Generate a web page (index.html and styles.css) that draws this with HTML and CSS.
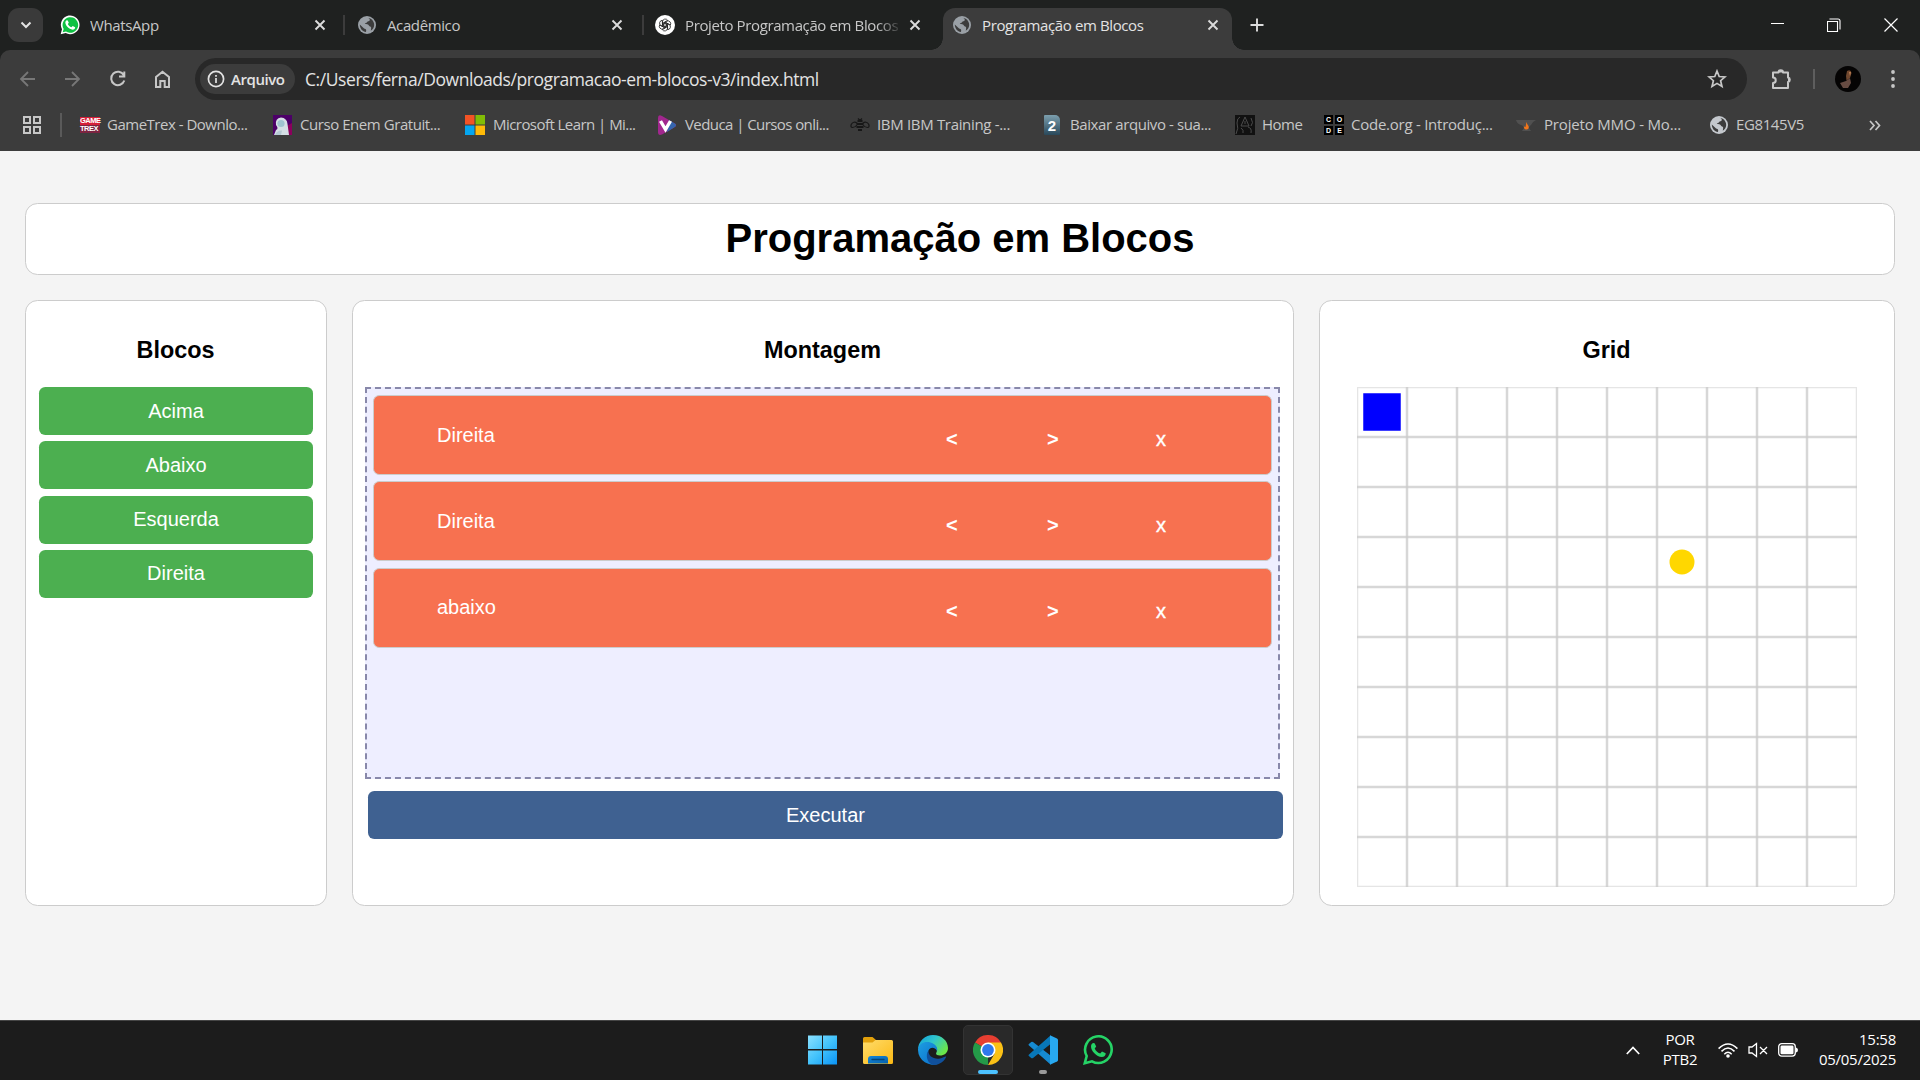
FILE: index.html
```html
<!DOCTYPE html>
<html lang="pt-BR">
<head>
<meta charset="utf-8">
<title>Programação em Blocos</title>
<link rel="stylesheet" href="styles.css">
</head>
<body>
<svg class="defs" width="0" height="0">
  <symbol id="globe" viewBox="0 0 18 18">
    <circle cx="9" cy="9" r="9" fill="currentColor"/>
    <path class="globe-land" d="M9 1.8C11 2 12 3 11.8 4.200C11.600 5.300 9.500 5 9 6.200C8.700 7.200 7 6.800 6.800 8C8.500 8.300 10.500 8 10.900 9.600C11 10.800 13 10.200 13.200 11.800L12.800 14.800C15 13.300 16.200 11.200 16.200 9C16.200 5 13 1.800 9 1.800ZM1.800 8.500L5.800 12.300C6.800 13.200 8.300 12.800 8.200 14.300L8 16.100C4.500 15.700 1.900 12.600 1.800 8.500Z"/>
  </symbol>
  <symbol id="close" viewBox="0 0 12 12"><path d="M1.500 1.500L10.500 10.500M10.500 1.500L1.500 10.500" stroke="currentColor" stroke-width="1.900" fill="none"/></symbol>
  <symbol id="phone" viewBox="0 0 30 30">
    <path d="M10.400 8C9.300 8.200 8 9.500 8 11.400C8 15.500 13.500 22 18.800 22C21.300 22 22.800 20.400 22.700 18.300L19 16.400L17.200 18.500C14.500 17.500 12.800 15.800 11.700 13.400L13.200 11.500L11.600 8.200Z" fill="currentColor"/>
  </symbol>
</svg>

<header class="browser">
  <div class="tabstrip">
    <button class="tab-search"><svg width="12" height="8" viewBox="0 0 12 8"><path d="M1.500 1.500L6 6L10.500 1.500" fill="none" stroke="#e3e3e3" stroke-width="2"/></svg></button>
    <div class="tab tab-1">
      <svg class="fav" width="20" height="20" viewBox="0 0 30 30"><path d="M1 29L3 21.500A14 14 0 1 1 8.500 27Z" fill="#fff"/><path d="M4 26L5.500 21A11.700 11.700 0 1 1 9 24.700Z" fill="#0fc143"/><use href="#phone" color="#fff"/></svg>
      <span class="tab-title">WhatsApp</span>
      <svg class="x" width="12" height="12"><use href="#close"/></svg>
    </div>
    <div class="tab tab-2">
      <svg class="fav globe" width="18" height="18"><use href="#globe"/></svg>
      <span class="tab-title">Acadêmico</span>
      <svg class="x" width="12" height="12"><use href="#close"/></svg>
    </div>
    <div class="tab tab-3">
      <svg class="fav" width="20" height="20" viewBox="0 0 20 20"><circle cx="10" cy="10" r="10" fill="#fff"/><g fill="none" stroke="#222" stroke-width=".8"><path id="petal" d="M7.500 11.500V6.700A2.800 2.800 0 0 1 12.700 5.400L8.700 7.800V12"/><use href="#petal" transform="rotate(60 10 10)"/><use href="#petal" transform="rotate(120 10 10)"/><use href="#petal" transform="rotate(180 10 10)"/><use href="#petal" transform="rotate(240 10 10)"/><use href="#petal" transform="rotate(300 10 10)"/></g></svg>
      <span class="tab-title fade">Projeto Programação em Blocos</span>
      <svg class="x" width="12" height="12"><use href="#close"/></svg>
    </div>
    <div class="tab active">
      <svg class="fav globe" width="18" height="18"><use href="#globe"/></svg>
      <span class="tab-title">Programação em Blocos</span>
      <svg class="x" width="12" height="12"><use href="#close"/></svg>
    </div>
    <svg class="new-tab" width="14" height="14" viewBox="0 0 14 14"><path d="M7 0.500V13.500M0.500 7H13.500" stroke="#dcdcdc" stroke-width="1.900"/></svg>
    <div class="window-controls">
      <svg width="14" height="14" viewBox="0 0 14 14"><path d="M1 5.500H14" stroke="#fff"/></svg>
      <svg width="14" height="14" viewBox="0 0 14 14"><path d="M3 1.500V1H11Q13 1 13 3V11.500M.5 3.500H10.500V13.500H.5Z" fill="none" stroke="#fff" stroke-width="1.100"/></svg>
      <svg width="14" height="14" viewBox="0 0 14 14"><path d="M.5 .5L13.500 13.500M13.500 .5L.5 13.500" stroke="#fff" stroke-width="1.200"/></svg>
    </div>
  </div>

  <div class="toolbar">
    <nav class="nav-icons">
      <svg class="dim" width="18" height="18" viewBox="0 0 18 18"><path d="M16 9H2M9 2L2 9L9 16"/></svg>
      <svg class="dim" width="18" height="18" viewBox="0 0 18 18"><path d="M1 9H15M8 2L15 9L8 16"/></svg>
      <svg width="18" height="18" viewBox="0 0 18 18"><path d="M15.300 10.500A6.700 6.700 0 1 1 14.800 5.200M15.300 1.500V6.500H10"/></svg>
      <svg width="18" height="18" viewBox="0 0 18 18"><path d="M2 17V7L8.500 1.800L15 7V17H10.700V11H6.300V17Z"/></svg>
    </nav>
    <div class="omnibox">
      <div class="chip"><svg width="18" height="18" viewBox="0 0 18 18"><circle cx="9" cy="9" r="7.600" fill="none" stroke="#e3e3e3" stroke-width="1.700"/><path d="M9 8V13M9 5V6.700" stroke="#e3e3e3" stroke-width="1.700"/></svg><span>Arquivo</span></div>
      <span class="url">C:/Users/ferna/Downloads/programacao-em-blocos-v3/index.html</span>
      <svg class="star" width="20" height="20" viewBox="0 0 20 20"><path d="M10 2L12.200 7.500L18 7.900L13.600 11.700L15 17.500L10 14.400L5 17.500L6.400 11.700L2 7.900L7.800 7.500Z" fill="none" stroke="#c7c7c7" stroke-width="1.700"/></svg>
    </div>
    <svg class="puzzle" width="22" height="22" viewBox="0 0 22 22"><path d="M2 4.500H7.500A2.200 2.200 0 0 1 12 4.500H17V9.500A2.300 2.300 0 0 1 17 14V20H2V15A2.600 2.600 0 0 0 2 9.500Z" fill="none" stroke="#c7c7c7" stroke-width="2" stroke-linejoin="round"/><path d="M7.500 4.500A2.200 2.200 0 0 1 12 4.500ZM17 9.500A2.300 2.300 0 0 1 17 14Z" fill="#c7c7c7"/></svg>
    <span class="divider"></span>
    <svg class="avatar" width="26" height="26" viewBox="0 0 26 26"><circle cx="13" cy="13" r="13" fill="#050404"/><path d="M12 5Q16 3 16.500 7L15 12L11.500 14.500L11 10Z" fill="#70482f"/><path d="M5 17L11 15L15 12L16 17L13 22L8 22Z" fill="#664b42"/><path d="M14 6L16 6L15 10Z" fill="#bd8055"/></svg>
    <svg class="menu" width="4" height="18" viewBox="0 0 4 18"><g fill="#c7c7c7"><circle cx="2" cy="2" r="1.900"/><circle cx="2" cy="9" r="1.900"/><circle cx="2" cy="16" r="1.900"/></g></svg>
  </div>

  <div class="bookmarks">
    <div class="bm-apps"><svg width="18" height="18" viewBox="0 0 18 18"><g fill="none" stroke="#c7c7c7" stroke-width="2"><path d="M1 1H7V7H1ZM11 1H17V7H11ZM1 11H7V17H1ZM11 11H17V17H11Z"/></g></svg></div>
    <div class="bm b1"><span class="trex"><i>GAME</i><i>TREX</i></span><span class="label">GameTrex - Downlo...</span></div>
    <div class="bm b2"><svg width="19" height="20" viewBox="0 0 19 20"><path d="M0 0H19V20H0Z" fill="#4c0068"/><path d="M12 12L19 8V20H14Z" fill="#8b005d"/><path d="M3 10Q2 3 8 2.500Q14 3 14.500 9L16 20H1L3 15Q6 13.500 3 10Z" fill="#d5dfe5"/><circle cx="8" cy="8.500" r="3.600" fill="#9fc3cf"/><path d="M2 20Q4 15 9 15.500L8 20Z" fill="#b5c9d3"/></svg><span class="label">Curso Enem Gratuit...</span></div>
    <div class="bm b3"><svg width="20" height="20" viewBox="0 0 20 20"><path d="M0 0H9.500V9.500H0Z" fill="#f35325"/><path d="M10.500 0H20V9.500H10.500Z" fill="#81bc06"/><path d="M0 10.500H9.500V20H0Z" fill="#05a6f0"/><path d="M10.500 10.500H20V20H10.500Z" fill="#ffba08"/></svg><span class="label">Microsoft Learn | Mi...</span></div>
    <div class="bm b4"><svg width="19" height="20" viewBox="0 0 19 20"><path d="M0 3Q0 -1 4 1L16 8Q20 10 16 12.500L4 19.500Q0 21 0 17Z" fill="#a1278e"/><path d="M11 5L16 8Q20 10 16 12.500L9 17Z" fill="#3465ad"/><path d="M2.500 6L7.500 14.500L12.500 6" stroke="#fff" stroke-width="3.400" fill="none"/></svg><span class="label">Veduca | Cursos onli...</span></div>
    <div class="bm b5"><svg width="20" height="20" viewBox="0 0 20 20"><path d="M7.500 8.500Q3.500 5.500 1.200 9.500Q.3 12.500 2.500 12.500Q5 12.500 7 10M12.500 8.500Q16.500 5.500 18.800 9.500Q19.700 12.500 17.500 12.500Q15 12.500 13 10M8 3.500L10 5.500L12 3.500" fill="none" stroke="#171717" stroke-width="1.200"/><path d="M7.500 6H12.500M6.500 9H13.500M6.500 12H13.500M8 15H12" stroke="#171717" stroke-width="1.900"/></svg><span class="label">IBM IBM Training -...</span></div>
    <div class="bm b6"><span class="two">2</span><span class="label">Baixar arquivo - sua...</span></div>
    <div class="bm b7"><svg width="20" height="20" viewBox="0 0 20 20"><path d="M0 0H20V20H0Z" fill="#111"/><path d="M1 19Q4 13 2 8Q2 3 5 2M10 2L6 11H14ZM6 13Q9 15 8 18M13 12Q17 13 16 18M16 3Q19 8 16 11M10 6V9" fill="none" stroke="#4b4b4b"/></svg><span class="label">Home</span></div>
    <div class="bm b8"><span class="code"><i>C</i><i>O</i><i>D</i><i>E</i></span><span class="label">Code.org - Introduç...</span></div>
    <div class="bm b9"><svg width="20" height="20" viewBox="0 0 20 20"><path d="M0 5H20Q16 7 15 10Q13 11 13 13L15 16H6L8 13Q7 10 5 10Q1 9 0 5Z" fill="#505050"/><path d="M10.500 7Q11 9.500 12.500 11Q13.500 14.500 10.500 14.500Q7.500 14.500 8 11.500L9.500 12Z" fill="#f27519"/></svg><span class="label">Projeto MMO - Mo...</span></div>
    <div class="bm b10"><svg class="globe light" width="18" height="18"><use href="#globe"/></svg><span class="label">EG8145V5</span></div>
    <svg class="more" width="12" height="11" viewBox="0 0 12 11"><path d="M1 1L5 5.500L1 10M6.500 1L10.500 5.500L6.500 10" fill="none" stroke="#c7c7c7" stroke-width="1.700"/></svg>
  </div>
</header>

<main class="page">
  <h1 class="card title">Programação em Blocos</h1>
  <div class="columns">
    <section class="card panel">
      <h3>Blocos</h3>
      <div class="palette">
        <button class="block">Acima</button>
        <button class="block">Abaixo</button>
        <button class="block">Esquerda</button>
        <button class="block">Direita</button>
      </div>
    </section>
    <section class="card panel">
      <h3>Montagem</h3>
      <div class="dropzone">
        <div class="step"><span class="name">Direita</span><b>&lt;</b><b>&gt;</b><b>x</b></div>
        <div class="step"><span class="name">Direita</span><b>&lt;</b><b>&gt;</b><b>x</b></div>
        <div class="step"><span class="name">abaixo</span><b>&lt;</b><b>&gt;</b><b>x</b></div>
      </div>
      <button class="run">Executar</button>
    </section>
    <section class="card panel">
      <h3>Grid</h3>
      <svg class="grid" width="500" height="500" viewBox="0 0 400 400">
        <g stroke="#ccc" stroke-opacity=".78" stroke-width="2">
          <path d="M40 0V400M80 0V400M120 0V400M160 0V400M200 0V400M240 0V400M280 0V400M320 0V400M360 0V400"/>
          <path d="M0 40H400M0 80H400M0 120H400M0 160H400M0 200H400M0 240H400M0 280H400M0 320H400M0 360H400"/>
        </g>
        <path d="M0 0H400V400H0Z" fill="none" stroke="#ccc" stroke-opacity=".5" stroke-width="2"/>
        <rect x="5" y="5" width="30" height="30" fill="#00f"/>
        <circle cx="260" cy="140" r="10" fill="#ffd700"/>
      </svg>
    </section>
  </div>
</main>

<footer class="taskbar">
  <div class="apps">
    <div class="app"><svg width="30" height="30" viewBox="0 0 30 30"><defs><linearGradient id="win" x1="0" y1="0" x2="1" y2="1"><stop offset="0" stop-color="#8be1ff"/><stop offset=".5" stop-color="#42c2fb"/><stop offset="1" stop-color="#0a93f5"/></linearGradient></defs><path d="M0 .5H14V14H0ZM15 .5H29V14H15ZM0 15.500H14V29.500H0ZM15 15.500H29V29.500H15Z" fill="url(#win)"/></svg></div>
    <div class="app"><svg width="30" height="30" viewBox="0 0 30 30"><defs><linearGradient id="fold" x1="0" y1="0" x2="1" y2="1"><stop offset="0" stop-color="#ffdc6b"/><stop offset="1" stop-color="#fbb914"/></linearGradient><linearGradient id="clip" x1="0" y1="0" x2="1" y2="1"><stop offset="0" stop-color="#1486d8"/><stop offset="1" stop-color="#0561ac"/></linearGradient></defs><path d="M0 3.500Q0 2 1.500 2H9.500L13 5H17V12H0Z" fill="#e2a00b"/><path d="M0 7.500H9.500L12.500 5H28.500Q30 5 30 6.500V27.500Q30 29 28.500 29H1.500Q0 29 0 27.500Z" fill="url(#fold)"/><path d="M5 28.500V24Q5 21 8 21H22Q25 21 25 24V28.500Z" fill="url(#clip)"/><path d="M9 24.500H21" stroke="#064577" stroke-width="1.300" stroke-linecap="round"/></svg></div>
    <div class="app"><svg width="30" height="30" viewBox="0 0 30 30"><defs><linearGradient id="edgeTop" x1="0" y1="0" x2="1" y2=".6"><stop offset="0" stop-color="#0f9fdd"/><stop offset=".5" stop-color="#30c5cc"/><stop offset="1" stop-color="#6be64a"/></linearGradient><linearGradient id="edgeBody" x1="0" y1="0" x2="1" y2="1"><stop offset="0" stop-color="#1d9de1"/><stop offset="1" stop-color="#0a6dca"/></linearGradient></defs><path d="M0 14A15 15 0 0 1 15 0C24 0 30 6 30 13C30 18 26 20.500 22 20.500C18.500 20.500 17.300 19 18.500 17.200C20 14.500 18 10 12 8Q5 6 0 14Z" fill="url(#edgeTop)"/><path d="M0 14C1 8 8 5.500 14 8C18 9.600 20 13 19 16C17 12 12 11.500 10.300 16C8 23 15 28 21 28.500A15 15 0 0 1 0 15Z" fill="url(#edgeBody)"/><path d="M10.500 15.500C10 21 15.500 24.500 22 23.500C25 23 27 21 28.300 21.500C27 25.500 22 30 16 30C9 29 7 20 10.500 15.500Z" fill="#10509c"/></svg></div>
    <div class="app current"><svg width="30" height="30" viewBox="0 0 30 30"><path d="M15 15L2 7.500A15 15 0 0 1 28 7.500Z" fill="#e73e31"/><path d="M15 15V30A15 15 0 0 1 2 7.500Z" fill="#249a48"/><path d="M15 7.500H28A15 15 0 0 1 15 30L21.500 18.700Z" fill="#fbc116"/><circle cx="15" cy="15" r="7.500" fill="#fff"/><circle cx="15" cy="15" r="5.900" fill="#3078ed"/></svg><i class="mark"></i></div>
    <div class="app"><svg width="30" height="30" viewBox="0 0 30 30"><path d="M1.500 8.500L3.200 7Q4 6.500 5 7L22.500 20.500V29.500L.7 10.300Q0 9.300 1.500 8.500Z" fill="#168bd2"/><path d="M1.500 21.500L3.200 23Q4 23.500 5 23L22.500 9V.5L.7 19.700Q0 20.600 1.500 21.500Z" fill="#0877b8"/><path d="M22 .2L29 3.500Q30 4 30 5V25Q30 26 29 26.500L22 29.800Z" fill="#28a9f1"/></svg><i class="mark small"></i></div>
    <div class="app"><svg width="30" height="30" viewBox="0 0 30 30"><path d="M1.800 28.200L3.700 21A13.300 13.300 0 1 1 9 26.300Z" fill="none" stroke="#25d366" stroke-width="2.600"/><use href="#phone" color="#25d366"/></svg></div>
  </div>
  <div class="tray">
    <svg class="up" width="14" height="9" viewBox="0 0 14 9"><path d="M.8 8L7 1.500L13.200 8" fill="none" stroke="#fff" stroke-width="1.700"/></svg>
    <div class="lang"><span>POR</span><span>PTB2</span></div>
    <svg class="wifi" width="20" height="15" viewBox="0 0 20 15"><g fill="none" stroke="#fff" stroke-width="1.500"><path d="M.6 5.600Q10 -3.700 19.400 5.600M3.500 8.400Q10 1.800 16.500 8.400M6.300 11.200Q10 7.500 13.700 11.200"/></g><circle cx="10" cy="13" r="1.800" fill="#fff"/></svg>
    <svg class="sound" width="20" height="16" viewBox="0 0 20 16"><path d="M1 5H4L8.500 1.500V14.500L4 11H1ZM12 5L19 12M19 5L12 12" fill="none" stroke="#fff" stroke-width="1.300"/></svg>
    <svg class="battery" width="20" height="14" viewBox="0 0 20 14"><rect x=".7" y=".7" width="16.600" height="12.400" rx="3" fill="none" stroke="#fff" stroke-width="1.300"/><rect x="2.500" y="2.500" width="13" height="8.800" rx="1.300" fill="#fff"/><path d="M18 4.500Q20 5 20 7Q20 9 18 9.500Z" fill="#fff"/></svg>
    <div class="clock"><span>15:58</span><span>05/05/2025</span></div>
  </div>
</footer>
</body>
</html>
```
FILE: styles.css
```css
* { box-sizing: border-box; }
body {
  margin: 0;
  width: 1920px;
  height: 1080px;
  overflow: hidden;
  display: flex;
  flex-direction: column;
  background: #f4f4f4;
  font-family: "Liberation Sans", Arial, sans-serif;
}
.defs { position: absolute; }
svg { display: block; flex: none; }
button { border: 0; font: inherit; padding: 0; }
i { font-style: normal; }

/* Browser frame */
.browser {
  height: 151px;
  flex: none;
  background: #1f2120;
  font-family: "Open Sans", "Noto Sans", sans-serif;
  color: #c7c7c7;
}
.tabstrip { height: 50px; display: flex; align-items: center; padding-left: 8px; }
.tab-search {
  width: 35px; height: 34px; border-radius: 11px;
  background: #3a3a3a; display: flex; align-items: center; justify-content: center;
}
.tab { height: 42px; display: flex; align-items: center; position: relative; }
.tab-1::after, .tab-2::after {
  content: ""; position: absolute; right: -1px; top: 11px;
  width: 2px; height: 20px; background: #3c3c3c;
}
.tab-1 { width: 284px; margin-left: 17px; padding-right: 18px; }
.tab-2 { width: 285px; margin-left: 14px; padding-right: 20px; }
.tab-3 { width: 288px; margin-left: 12px; padding-right: 22px; }
.tab.active {
  width: 289px; align-self: flex-end; background: #3c3c3c;
  border-radius: 12px 12px 0 0; padding: 0 13px 8px 10px; color: #e3e3e3;
}
.tab.active::before, .tab.active::after {
  content: ""; position: absolute; bottom: 0; width: 12px; height: 12px;
}
.tab.active::before { left: -12px; background: radial-gradient(circle at 0 0, transparent 11.5px, #3c3c3c 12px); }
.tab.active::after { right: -12px; background: radial-gradient(circle at 100% 0, transparent 11.5px, #3c3c3c 12px); }
.tab-title {
  flex: 1; margin-left: 10px; font-size: 15px; letter-spacing: -.38px;
  white-space: nowrap; overflow: hidden;
}
.tab .globe + .tab-title { margin-left: 11px; }
.fade {
  margin-right: 6px;
  -webkit-mask-image: linear-gradient(90deg, #000 88%, transparent 100%);
  mask-image: linear-gradient(90deg, #000 88%, transparent 100%);
}
.x { color: #dcdcdc; }
.globe { color: #9aa0a6; }
.globe.light { color: #c4c8cd; }
.globe-land { fill: #3c3c3c; }
.new-tab { margin-left: 18px; }
.window-controls { margin-left: auto; margin-right: 22px; display: flex; gap: 43px; }

.toolbar {
  height: 58px; display: flex; align-items: center; background: #3c3c3c;
  border-radius: 10px 10px 0 0; padding-left: 19px; margin-bottom: -1px;
}
.nav-icons { display: flex; gap: 27px; }
.nav-icons svg { fill: none; stroke: #c7c7c7; stroke-width: 2; }
.nav-icons .dim { stroke: #777; stroke-width: 1.8; }
.omnibox {
  width: 1552px; height: 42px; margin-left: 23px; border-radius: 21px;
  background: #282828; display: flex; align-items: center; padding: 0 20px 0 5px;
}
.chip {
  width: 95px; height: 30px; border-radius: 15px; background: #3c3c3c; color: #e3e3e3;
  display: flex; align-items: center; gap: 6px; padding-left: 7px;
  font-size: 15px; font-weight: 600; letter-spacing: -.45px;
}
.url { margin-left: 10px; font-size: 17.5px; letter-spacing: -.43px; color: #e3e3e3; white-space: nowrap; }
.star { margin-left: auto; }
.puzzle { margin-left: 24px; }
.divider { width: 2px; height: 20px; background: #5e5e5e; margin-left: 20px; }
.avatar { margin-left: 20px; }
.menu { margin-left: 30px; }

.bookmarks {
  height: 44px; display: flex; align-items: center; background: #3c3c3c;
  padding: 0 0 8px 23px;
}
.bm-apps { width: 57px; position: relative; }
.bm-apps::after { content: ""; position: absolute; left: 37px; top: -3px; width: 2px; height: 24px; background: #5a5a5a; }
.bm { display: flex; align-items: center; gap: 8px; font-size: 15px; white-space: nowrap; }
.label { position: relative; top: -1px; }
.b1 { width: 193px; letter-spacing: -.49px; gap: 7px; }
.b2 { width: 192px; letter-spacing: -.44px; }
.b3 { width: 193px; letter-spacing: -.55px; }
.b4 { width: 192px; letter-spacing: -.57px; }
.b5 { width: 193px; letter-spacing: -.33px; gap: 7px; }
.b6 { width: 192px; letter-spacing: -.4px; gap: 10px; padding-left: 1px; }
.b7 { width: 89px; letter-spacing: -.5px; gap: 7px; }
.b8 { width: 192px; letter-spacing: -.25px; gap: 7px; }
.b9 { width: 194px; letter-spacing: -.17px; }
.b10 { width: 159px; letter-spacing: -.38px; }
.trex {
  width: 20px; display: flex; flex-direction: column;
  font: bold 7.5px/8px "Liberation Sans", sans-serif; color: #fff; letter-spacing: -.5px;
}
.trex i { background: #d61f38; }
.trex i + i { background: #7d2441; }
.two {
  width: 16px; height: 20px; border-radius: 1px 5px 1px 1px;
  background: linear-gradient(#7c9fae, #29485a); color: #fff;
  font: bold 15px/21px "Liberation Sans", sans-serif; text-align: center; letter-spacing: 0;
}
.code {
  width: 20px; height: 20px; display: grid; grid-template: 9px 9px / 9px 9px; gap: 2px;
  font: bold 7px/9px "Liberation Sans", sans-serif; color: #fff; text-align: center; letter-spacing: 0;
}
.code i { background: #000; }

/* Page */
.page { height: 869px; flex: none; padding: 52px 25px 0; color: #000; }
.card { background: #fff; border: 1px solid #ccc; border-radius: 12.5px; }
.title { margin: 0 0 25px; height: 72px; text-align: center; font-size: 40px; line-height: 69px; }
.columns { display: grid; grid-template-columns: 302px 942px 576px; gap: 25px; height: 606px; }
.panel { padding: 12px 13px 12px 12px; }
.panel h3 { margin: 24px 0 23px; font-size: 23.4px; line-height: 27px; text-align: center; }
.palette { display: flex; flex-direction: column; gap: 6.25px; padding-left: 1px; }
.block { height: 48px; border-radius: 6.25px; background: #4caf50; color: #fff; font-size: 20px; }
.dropzone {
  height: 392px; padding: 6px; background: #eef; border: 2px dashed #88a;
  display: flex; flex-direction: column; gap: 6.25px;
}
.step {
  height: 80px; background: #f77150; border: 1px solid #ccc; border-radius: 6.25px; color: #fff;
  display: flex; align-items: center; font-size: 20px; padding-left: 63px;
}
.step .name { width: 509px; }
.step b { width: 101px; padding-top: 8px; }
.step b:nth-of-type(2) { width: 109px; }
.step b:nth-of-type(3) { font-weight: normal; -webkit-text-stroke: .4px #fff; }
.run {
  width: 915px; height: 48px; margin: 12px 0 0 3px; border-radius: 6.25px;
  background: #3f6191; color: #fff; font-size: 20px;
}
.grid { margin: 0 auto; }

/* Taskbar */
.taskbar {
  height: 60px; flex: none; background: #1c1c1c; border-top: 1px solid #454545;
  display: grid; grid-template-columns: 798px 326px 1fr; color: #fff;
  font-family: "Open Sans", "Noto Sans", sans-serif; padding-bottom: 1px;
}
.apps { grid-column: 2; display: flex; align-items: center; gap: 5px; }
.app {
  width: 50px; height: 50px; border-radius: 5px; position: relative;
  display: flex; align-items: center; justify-content: center;
}
.app:first-child { margin-right: 0; }
.current { background: #292929; border: 1px solid #333; }
.mark { position: absolute; left: 14px; bottom: 0; width: 20px; height: 4px; border-radius: 2px; background: #4cc2ff; }
.mark.small { left: 21px; width: 8px; background: #9a9a9a; bottom: 1px; }
.tray { display: flex; align-items: center; justify-content: flex-end; padding-right: 24px; font-size: 15px; line-height: 20px; }
.lang, .clock { display: flex; flex-direction: column; padding-bottom: 2px; letter-spacing: -.25px; }
.lang { width: 36px; align-items: center; margin: 0 20px 0 22px; }
.sound { margin: 0 10px; }
.clock { width: 78px; align-items: flex-end; margin-left: 20px; }
```
